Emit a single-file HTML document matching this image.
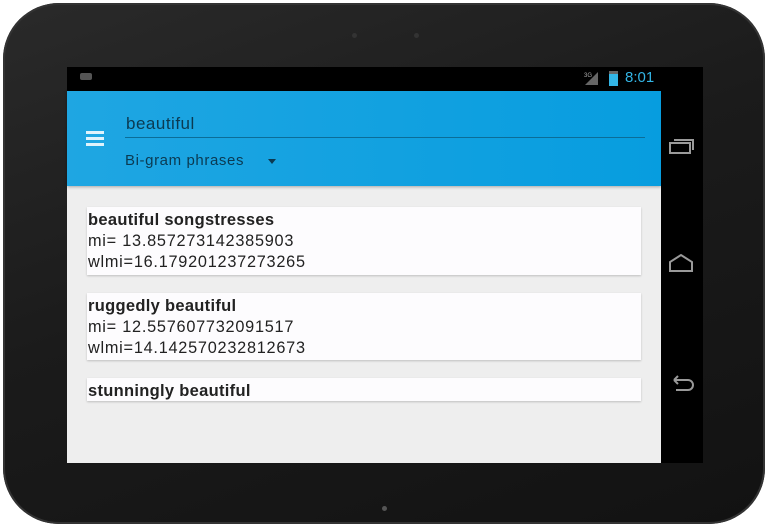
<!DOCTYPE html>
<html><head><meta charset="utf-8"><style>
*{margin:0;padding:0;box-sizing:border-box}
body{width:768px;height:527px;background:#fff;position:relative;overflow:hidden;font-family:"Liberation Sans",sans-serif}
.dev{position:absolute;left:3px;top:3px;width:762px;height:521px;border-radius:56px;background:linear-gradient(160deg,#2a2a2a 0%,#1b1b1b 45%,#121212 100%);box-shadow:inset 0 0 0 2px #333}
.scr{position:absolute;left:67px;top:67px;width:636px;height:396px;background:#000}
.app{position:absolute;left:67px;top:91px;width:594px;height:372px;background:#eeeeee}
.bar{position:absolute;left:0;top:0;width:594px;height:95px;background:linear-gradient(90deg,#1fa6e2,#079ddf);box-shadow:0 1px 3px rgba(0,0,0,.3)}
.card{position:absolute;left:20px;width:554px;background:#fdfcfe;box-shadow:0 1px 2px rgba(0,0,0,.2);padding:3px 0 0 1px;font-size:16.3px;line-height:21px;color:#222;letter-spacing:0.75px}
.card b{color:#222;font-size:16.5px;letter-spacing:0.3px}
.dot{position:absolute;width:5px;height:5px;border-radius:50%;background:#333}
</style></head><body>
<div class="dev"></div>
<div class="dot" style="left:352px;top:33px"></div>
<div class="dot" style="left:414px;top:33px"></div>
<div class="dot" style="left:382px;top:506px;background:#555"></div>
<div class="scr"></div>
<div style="position:absolute;left:80px;top:73px;width:12px;height:7px;background:#555;border-radius:2px"></div>
<div style="position:absolute;left:584px;top:71px;width:16px;height:14px;"><svg width="16" height="14"><polygon points="14,1 14,14 1,14" fill="#666"/><text x="0" y="6" font-size="6" fill="#aaa" font-family="Liberation Sans">3G</text></svg></div>
<div style="position:absolute;left:609px;top:71px;width:9px;height:15px;background:#33b5e5;border-top:3px solid #666"></div>
<div style="position:absolute;left:625px;top:69px;color:#33b5e5;font-size:15px">8:01</div>
<div class="app">
<div class="bar">
<div style="position:absolute;left:19px;top:40px;width:18px;height:3px;background:#dff3fc;box-shadow:0 6px 0 #dff3fc,0 12px 0 #dff3fc"></div>
<div style="position:absolute;left:59px;top:23px;font-size:17px;letter-spacing:0.5px;color:#0b3a52">beautiful</div>
<div style="position:absolute;left:58px;top:46px;width:520px;height:1px;background:#0b6d98"></div>
<div style="position:absolute;left:58px;top:61px;font-size:15px;letter-spacing:0.6px;color:#0b3a52">Bi-gram phrases</div>
<div style="position:absolute;left:201px;top:68px;width:0;height:0;border-left:4px solid transparent;border-right:4px solid transparent;border-top:5px solid #0b3a52"></div>
</div>
<div class="card" style="top:116px;height:68px"><b>beautiful songstresses</b><br>mi= 13.857273142385903<br>wlmi=16.179201237273265</div>
<div class="card" style="top:202px;height:67px"><b>ruggedly beautiful</b><br>mi= 12.557607732091517<br>wlmi=14.142570232812673</div>
<div class="card" style="top:287px;height:23px;overflow:hidden"><b>stunningly beautiful</b></div>
</div>
<svg style="position:absolute;left:668px;top:135px" width="30" height="260" fill="none" stroke="#9a9a9a" stroke-width="2">
<rect x="2" y="8" width="20" height="10"/><path d="M6 5 H25 V15"/>
<path d="M2 136 V127 L13 120 L24 127 V136 Z"/>
<path d="M6 245 H20 A5 5 0 0 1 20 255 H8 M6 245 L10 241 M6 245 L10 249"/>
</svg>
</body></html>
